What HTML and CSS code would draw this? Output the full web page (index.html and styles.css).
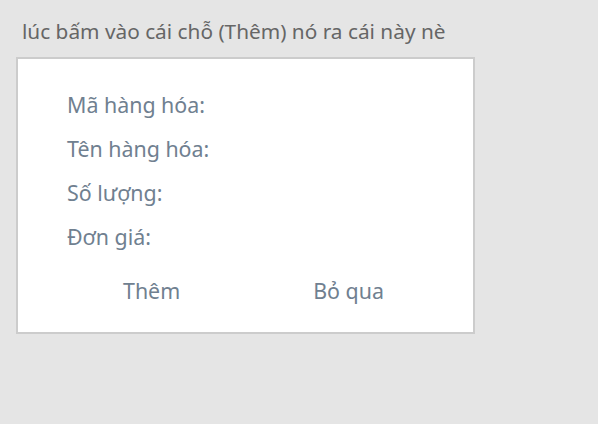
FILE: index.html
```html
<!DOCTYPE html>
<html lang="vi">
<head>
<meta charset="utf-8">
<link rel="stylesheet" href="styles.css">
</head>
<body>
<p class="caption">lúc bấm vào cái chỗ (Thêm) nó ra cái này nè</p>
<div class="dialog">
  <div class="field">Mã hàng hóa:</div>
  <div class="field">Tên hàng hóa:</div>
  <div class="field">Số lượng:</div>
  <div class="field">Đơn giá:</div>
  <div class="actions">
    <span class="btn btn-add">Thêm</span>
    <span class="btn btn-skip">Bỏ qua</span>
  </div>
</div>
</body>
</html>
```
FILE: styles.css
```css
html, body {
  margin: 0;
  padding: 0;
  background: #e5e5e5;
  font-family: "Noto Sans", "Open Sans", sans-serif;
}
.caption {
  margin: 0;
  padding: 19px 0 0 22px;
  height: 39px;
  box-sizing: border-box;
  font-size: 20.8px;
  line-height: 24px;
  color: #666666;
}
.dialog {
  margin: 18px 0 0 16px;
  width: 459px;
  height: 277px;
  box-sizing: border-box;
  background: #fff;
  border: 2px solid #cccccc;
  padding: 31px 0 0 49px;
  display: flex;
  flex-direction: column;
}
.field {
  height: 44px;
  font-size: 21.4px;
  line-height: 30px;
  color: #708090;
}
.actions {
  display: flex;
  margin-top: 10px;
  padding-left: 56px;
  gap: 133px;
  font-size: 21.4px;
  line-height: 30px;
  color: #708090;
}
```
